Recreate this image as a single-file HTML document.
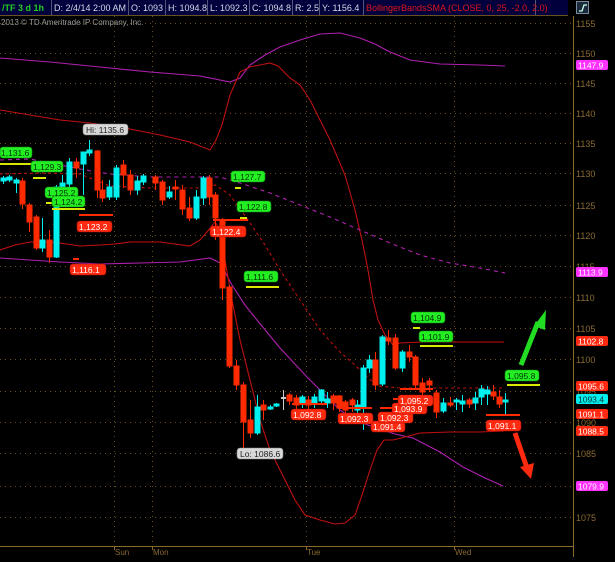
<!DOCTYPE html>
<html><head><meta charset="utf-8"><style>
html,body{margin:0;padding:0;background:#000;}
body{width:615px;height:557px;overflow:hidden;font-family:"Liberation Sans","DejaVu Sans",sans-serif;}
svg text{font-family:"Liberation Sans","DejaVu Sans",sans-serif;}
</style></head><body>
<svg width="615" height="557" viewBox="0 0 615 557" xmlns="http://www.w3.org/2000/svg">
<rect width="615" height="557" fill="#000"/>
<!-- top bar -->
<rect x="0" y="0" width="568" height="15" fill="#00003c"/>
<g stroke="#55557a" stroke-width="1" fill="none">
<line x1="51.5" y1="0" x2="51.5" y2="15"/><line x1="128.5" y1="0" x2="128.5" y2="15"/>
<line x1="165.5" y1="0" x2="165.5" y2="15"/><line x1="207.5" y1="0" x2="207.5" y2="15"/>
<line x1="249.5" y1="0" x2="249.5" y2="15"/><line x1="292.5" y1="0" x2="292.5" y2="15"/>
<line x1="319.5" y1="0" x2="319.5" y2="15"/><line x1="363.5" y1="0" x2="363.5" y2="15"/>
<line x1="535.5" y1="0" x2="535.5" y2="15"/>
</g>
<line x1="0" y1="15.5" x2="568" y2="15.5" stroke="#6a5020"/>
<g font-size="9" fill="#d8d8e8">
<text x="2" y="11" fill="#22cc22" font-weight="bold">/TF 3 d 1h</text>
<text x="54" y="11">D: 2/4/14 2:00 AM</text>
<text x="131" y="11">O: 1093</text>
<text x="168" y="11">H: 1094.8</text>
<text x="210" y="11">L: 1092.3</text>
<text x="252" y="11">C: 1094.8</text>
<text x="295" y="11">R: 2.5</text>
<text x="322" y="11">Y: 1156.4</text>
<text x="366" y="11" fill="#e01818">BollingerBandsSMA (CLOSE, 0, 25, -2.0, 2.0)</text>
</g>
<rect x="576.5" y="1.5" width="12" height="12" fill="#1a2a3a" stroke="#7a8a9a"/>
<path d="M579 11 L582 11 L584 5 L587 5" stroke="#cfe" stroke-width="1.3" fill="none"/>
<!-- grid -->
<g stroke="#6a5018" stroke-width="1" stroke-dasharray="1,4">
<line x1="0" y1="23.5" x2="573" y2="23.5"/><line x1="0" y1="53.5" x2="573" y2="53.5"/>
<line x1="0" y1="83.5" x2="573" y2="83.5"/><line x1="0" y1="113.5" x2="573" y2="113.5"/>
<line x1="0" y1="143.5" x2="573" y2="143.5"/><line x1="0" y1="173.5" x2="573" y2="173.5"/>
<line x1="0" y1="205.5" x2="573" y2="205.5"/><line x1="0" y1="235.5" x2="573" y2="235.5"/>
<line x1="0" y1="266.5" x2="573" y2="266.5"/><line x1="0" y1="297.5" x2="573" y2="297.5"/>
<line x1="0" y1="328.5" x2="573" y2="328.5"/><line x1="0" y1="359.5" x2="573" y2="359.5"/>
<line x1="0" y1="391.5" x2="573" y2="391.5"/><line x1="0" y1="422.5" x2="573" y2="422.5"/>
<line x1="0" y1="453.5" x2="573" y2="453.5"/><line x1="0" y1="486.5" x2="573" y2="486.5"/>
<line x1="0" y1="517.5" x2="573" y2="517.5"/>
<line x1="114.5" y1="16" x2="114.5" y2="546"/><line x1="152.5" y1="16" x2="152.5" y2="546"/>
<line x1="306.5" y1="16" x2="306.5" y2="546"/><line x1="454.5" y1="16" x2="454.5" y2="546"/>
</g>
<line x1="573.5" y1="16" x2="573.5" y2="557" stroke="#8a6a28"/>
<line x1="0" y1="546.5" x2="573" y2="546.5" stroke="#8a6a28"/>
<g stroke="#8a6a28"><line x1="114.5" y1="546" x2="114.5" y2="550"/><line x1="152.5" y1="546" x2="152.5" y2="550"/><line x1="306.5" y1="546" x2="306.5" y2="550"/><line x1="454.5" y1="546" x2="454.5" y2="550"/></g>
<g font-size="8" fill="#8a6a30">
<text x="115" y="555">Sun</text><text x="153" y="555">Mon</text><text x="307" y="555">Tue</text><text x="455" y="555">Wed</text>
</g>
<g font-size="9" fill="#8a6a30">
<text x="576" y="27">1155</text><text x="576" y="57">1150</text><text x="576" y="87">1145</text>
<text x="576" y="117">1140</text><text x="576" y="147">1135</text><text x="576" y="177">1130</text>
<text x="576" y="209">1125</text><text x="576" y="239">1120</text><text x="576" y="270">1115</text>
<text x="576" y="301">1110</text><text x="576" y="332">1105</text><text x="576" y="363">1100</text>
<text x="576" y="395">1095</text><text x="576" y="426">1090</text><text x="576" y="457">1085</text>
<text x="576" y="490">1080</text><text x="576" y="521">1075</text>
</g>
<text x="1" y="25" font-size="8" fill="#9a9a9a">2013 © TD Ameritrade IP Company, Inc.</text>
<!-- bands -->
<g fill="none" stroke-width="1.1">
<polyline stroke="#b020b0" points="0,58 50,62 100,67 150,72 200,76 230,82 240,78 250,65 265,55 280,47 300,40 320,34 340,33 360,38 375,44 390,52 410,60 440,64 480,65 505,66"/>
<polyline stroke="#b020b0" points="0,258 60,262 100,264 140,263 180,262 210,258 220,263 232,285 245,305 257,320 280,348 307,377 325,395 340,410 355,420 373,427 395,434 413,438 440,452 463,467 485,478 503,486"/>
<polyline stroke="#c01010" points="0,110 30,115 60,120 90,123 125,128 160,135 190,142 210,150 216,140 222,125 230,95 240,72 250,67 260,65 270,63 278,66 290,78 300,85 310,100 320,120 330,140 345,175 355,210 362,240 368,270 373,300 378,320 385,335 393,345 400,343 420,342 460,342 504,342"/>
<polyline stroke="#c01010" points="0,250 15,245 30,242 45,242 60,243 80,246 100,245 115,244 130,242 160,242 190,246 200,240 207,232 215,222 219,228 225,260 232,300 240,340 250,380 260,420 270,450 285,480 295,500 305,515 320,520 335,524 345,523 355,515 362,495 370,470 377,450 384,440 393,440 405,437 420,433 450,432 480,432 504,431"/>
<polyline stroke="#b020b0" stroke-dasharray="4,4" points="0,160 30,159 60,165 80,169 110,174 150,177 220,177 240,183 270,193 300,205 330,217 360,230 390,243 420,255 450,263 480,268 505,273"/>
<polyline stroke="#c01010" stroke-dasharray="3,3" points="0,174 40,173 80,174 110,186 150,188 200,188 215,185 230,195 248,220 265,245 280,270 300,300 320,330 340,352 355,365 368,378 378,386 400,388 504,388"/>
</g>
<!-- candles -->
<g stroke-width="1">
<g fill="#00f0f0" stroke="#00f0f0">
<line x1="3.5" y1="176" x2="3.5" y2="184"/><rect x="1" y="178" width="5" height="3"/>
<line x1="9.5" y1="175" x2="9.5" y2="182"/><rect x="7" y="177" width="5" height="3"/>
<line x1="16.5" y1="178" x2="16.5" y2="193"/><rect x="14" y="180" width="5" height="3"/>
<line x1="42.5" y1="218" x2="42.5" y2="252"/><rect x="40" y="240" width="5" height="8"/>
<line x1="56.5" y1="185" x2="56.5" y2="258"/><rect x="54" y="187" width="5" height="70"/>
<line x1="62.5" y1="175" x2="62.5" y2="190"/><rect x="60" y="183" width="5" height="4"/>
<line x1="69.5" y1="158" x2="69.5" y2="188"/><rect x="67" y="162" width="5" height="22"/>
<line x1="83.5" y1="152" x2="83.5" y2="195"/><rect x="81" y="152" width="5" height="12"/>
<line x1="89.5" y1="140" x2="89.5" y2="156"/><rect x="87" y="150" width="5" height="3"/>
<line x1="109.5" y1="180" x2="109.5" y2="200"/><rect x="107" y="187" width="5" height="10"/>
<line x1="116.5" y1="165" x2="116.5" y2="200"/><rect x="114" y="168" width="5" height="29"/>
<line x1="137.5" y1="176" x2="137.5" y2="195"/><rect x="135" y="181" width="5" height="9"/>
<line x1="143.5" y1="174" x2="143.5" y2="185"/><rect x="141" y="176" width="5" height="6"/>
<line x1="169.5" y1="186" x2="169.5" y2="199"/><rect x="167" y="192" width="5" height="5"/>
<line x1="196.5" y1="190" x2="196.5" y2="220"/><rect x="194" y="197" width="5" height="21"/>
<line x1="203.5" y1="176" x2="203.5" y2="205"/><rect x="201" y="178" width="5" height="20"/>
<line x1="257.5" y1="395" x2="257.5" y2="435"/><rect x="255" y="407" width="5" height="26"/>
<line x1="270.5" y1="405" x2="270.5" y2="410"/><rect x="268" y="407" width="5" height="2"/>
<line x1="276.5" y1="403" x2="276.5" y2="407"/><rect x="274" y="404" width="5" height="2"/>
<line x1="302.5" y1="395" x2="302.5" y2="408"/><rect x="300" y="397" width="5" height="6"/>
<line x1="314.5" y1="394" x2="314.5" y2="408"/><rect x="312" y="397" width="5" height="7"/>
<line x1="321.5" y1="389" x2="321.5" y2="404"/><rect x="319" y="390" width="5" height="11"/>
<line x1="327.5" y1="392" x2="327.5" y2="408"/><rect x="325" y="399" width="5" height="4"/>
<line x1="357.5" y1="400" x2="357.5" y2="415"/><rect x="355" y="405" width="5" height="5"/>
<line x1="363.5" y1="365" x2="363.5" y2="430"/><rect x="361" y="368" width="5" height="39"/>
<line x1="369.5" y1="355" x2="369.5" y2="373"/><rect x="367" y="360" width="5" height="8"/>
<line x1="382.5" y1="335" x2="382.5" y2="386"/><rect x="380" y="337" width="5" height="47"/>
<line x1="402.5" y1="350" x2="402.5" y2="372"/><rect x="400" y="352" width="5" height="16"/>
<line x1="443.5" y1="398" x2="443.5" y2="413"/><rect x="441" y="403" width="5" height="8"/>
<line x1="456.5" y1="398" x2="456.5" y2="410"/><rect x="454" y="400" width="5" height="2"/>
<line x1="462.5" y1="395" x2="462.5" y2="412"/><rect x="460" y="401" width="5" height="3"/>
<line x1="475.5" y1="392" x2="475.5" y2="410"/><rect x="473" y="398" width="5" height="5"/>
<line x1="481.5" y1="385" x2="481.5" y2="405"/><rect x="479" y="389" width="5" height="8"/>
<line x1="487.5" y1="386" x2="487.5" y2="405"/><rect x="485" y="390" width="5" height="4"/>
<line x1="505.5" y1="393" x2="505.5" y2="415"/><rect x="503" y="400" width="5" height="2"/>
</g>
<g fill="#ff2a00" stroke="#ff2a00">
<line x1="22.5" y1="178" x2="22.5" y2="209"/><rect x="20" y="181" width="5" height="23"/>
<line x1="29.5" y1="203" x2="29.5" y2="232"/><rect x="27" y="205" width="5" height="17"/>
<line x1="36.5" y1="215" x2="36.5" y2="250"/><rect x="34" y="217" width="5" height="31"/>
<line x1="49.5" y1="230" x2="49.5" y2="263"/><rect x="47" y="240" width="5" height="17"/>
<line x1="76.5" y1="158" x2="76.5" y2="178"/><rect x="74" y="162" width="5" height="6"/>
<line x1="97.5" y1="150" x2="97.5" y2="198"/><rect x="95" y="151" width="5" height="39"/>
<line x1="102.5" y1="180" x2="102.5" y2="202"/><rect x="100" y="190" width="5" height="8"/>
<line x1="123.5" y1="160" x2="123.5" y2="188"/><rect x="121" y="165" width="5" height="10"/>
<line x1="130.5" y1="170" x2="130.5" y2="195"/><rect x="128" y="175" width="5" height="15"/>
<line x1="155.5" y1="175" x2="155.5" y2="190"/><rect x="153" y="177" width="5" height="6"/>
<line x1="162.5" y1="180" x2="162.5" y2="205"/><rect x="160" y="182" width="5" height="18"/>
<line x1="175.5" y1="180" x2="175.5" y2="200"/><rect x="173" y="187" width="5" height="2"/>
<line x1="182.5" y1="185" x2="182.5" y2="215"/><rect x="180" y="190" width="5" height="19"/>
<line x1="189.5" y1="197" x2="189.5" y2="221"/><rect x="187" y="208" width="5" height="10"/>
<line x1="209.5" y1="175" x2="209.5" y2="205"/><rect x="207" y="178" width="5" height="19"/>
<line x1="215.5" y1="192" x2="215.5" y2="240"/><rect x="213" y="195" width="5" height="23"/>
<line x1="222.5" y1="218" x2="222.5" y2="300"/><rect x="220" y="220" width="5" height="68"/>
<line x1="229.5" y1="285" x2="229.5" y2="368"/><rect x="227" y="287" width="5" height="79"/>
<line x1="236.5" y1="360" x2="236.5" y2="390"/><rect x="234" y="366" width="5" height="19"/>
<line x1="243.5" y1="382" x2="243.5" y2="448"/><rect x="241" y="385" width="5" height="37"/>
<line x1="250.5" y1="400" x2="250.5" y2="438"/><rect x="248" y="420" width="5" height="13"/>
<line x1="263.5" y1="400" x2="263.5" y2="420"/><rect x="261" y="405" width="5" height="5"/>
<line x1="289.5" y1="393" x2="289.5" y2="405"/><rect x="287" y="395" width="5" height="6"/>
<line x1="296.5" y1="395" x2="296.5" y2="410"/><rect x="294" y="398" width="5" height="7"/>
<line x1="308.5" y1="396" x2="308.5" y2="410"/><rect x="306" y="400" width="5" height="5"/>
<line x1="333.5" y1="394" x2="333.5" y2="410"/><rect x="331" y="396" width="5" height="7"/>
<line x1="339.5" y1="395" x2="339.5" y2="412"/><rect x="337" y="396" width="5" height="12"/>
<line x1="345.5" y1="400" x2="345.5" y2="415"/><rect x="343" y="402" width="5" height="8"/>
<line x1="352.5" y1="398" x2="352.5" y2="412"/><rect x="350" y="400" width="5" height="5"/>
<line x1="375.5" y1="352" x2="375.5" y2="390"/><rect x="373" y="360" width="5" height="25"/>
<line x1="388.5" y1="330" x2="388.5" y2="345"/><rect x="386" y="338" width="5" height="3"/>
<line x1="395.5" y1="334" x2="395.5" y2="370"/><rect x="393" y="338" width="5" height="30"/>
<line x1="409.5" y1="345" x2="409.5" y2="362"/><rect x="407" y="352" width="5" height="5"/>
<line x1="415.5" y1="355" x2="415.5" y2="388"/><rect x="413" y="357" width="5" height="28"/>
<line x1="422.5" y1="378" x2="422.5" y2="395"/><rect x="420" y="383" width="5" height="9"/>
<line x1="429.5" y1="378" x2="429.5" y2="392"/><rect x="427" y="381" width="5" height="4"/>
<line x1="436.5" y1="390" x2="436.5" y2="418"/><rect x="434" y="393" width="5" height="19"/>
<line x1="450.5" y1="397" x2="450.5" y2="407"/><rect x="448" y="403" width="5" height="2"/>
<line x1="469.5" y1="398" x2="469.5" y2="408"/><rect x="467" y="400" width="5" height="4"/>
<line x1="493.5" y1="385" x2="493.5" y2="400"/><rect x="491" y="392" width="5" height="4"/>
<line x1="499.5" y1="390" x2="499.5" y2="408"/><rect x="497" y="397" width="5" height="7"/>
</g>
<line x1="283.5" y1="390" x2="283.5" y2="410" stroke="#ccc"/><rect x="281" y="397" width="5" height="2" fill="#ccc"/>
</g>
<!-- marker lines -->
<g stroke-width="2">
<g stroke="#d8e800">
<line x1="0" y1="164" x2="33" y2="164"/><line x1="33" y1="178" x2="46" y2="178"/>
<line x1="46" y1="203" x2="53" y2="203"/><line x1="52" y1="209" x2="85" y2="209"/>
<line x1="235" y1="188" x2="241" y2="188"/><line x1="240" y1="218" x2="247" y2="218"/>
<line x1="246" y1="287" x2="279" y2="287"/><line x1="413" y1="328" x2="420" y2="328"/>
<line x1="420" y1="346" x2="453" y2="346"/><line x1="507" y1="385" x2="540" y2="385"/>
</g>
<g stroke="#ff2a00">
<line x1="79" y1="215" x2="113" y2="215"/><line x1="73" y1="259" x2="79" y2="259"/>
<line x1="213" y1="220" x2="248" y2="220"/><line x1="292" y1="404" x2="327" y2="404"/>
<line x1="340" y1="408" x2="372" y2="408"/><line x1="380" y1="408" x2="415" y2="408"/>
<line x1="393" y1="399" x2="426" y2="399"/><line x1="400" y1="389" x2="433" y2="389"/>
<line x1="486" y1="415" x2="520" y2="415"/>
</g>
</g>
<!-- labels -->
<g font-size="8.5">
<g fill="#22ee22" stroke="#118811" stroke-width="0.6">
<rect x="0" y="147" width="32" height="11" rx="3"/><rect x="31" y="161" width="32" height="11" rx="3"/>
<rect x="45" y="187" width="33" height="11" rx="3"/><rect x="52" y="196" width="33" height="11" rx="3"/>
<rect x="231" y="171" width="34" height="11" rx="3"/><rect x="237" y="201" width="34" height="11" rx="3"/>
<rect x="244" y="271" width="34" height="11" rx="3"/><rect x="411" y="312" width="34" height="11" rx="3"/>
<rect x="419" y="331" width="34" height="11" rx="3"/><rect x="505" y="370" width="34" height="11" rx="3"/>
</g>
<g fill="#003300">
<text x="1" y="156">1,131.6</text><text x="33" y="170">1,129.3</text>
<text x="47" y="196">1,125.2</text><text x="54" y="205">1,124.2</text>
<text x="233" y="180">1,127.7</text><text x="239" y="210">1,122.8</text>
<text x="246" y="280">1,111.6</text><text x="413" y="321">1,104.9</text>
<text x="421" y="340">1,101.9</text><text x="507" y="379">1,095.8</text>
</g>
<g fill="#ff2a10" stroke="#aa1100" stroke-width="0.6">
<rect x="77" y="221" width="35" height="11" rx="3"/><rect x="70" y="264" width="36" height="11" rx="3"/>
<rect x="210" y="226" width="36" height="11" rx="3"/><rect x="291" y="409" width="35" height="11" rx="3"/>
<rect x="371" y="421" width="34" height="11" rx="3"/><rect x="338" y="413" width="35" height="11" rx="3"/>
<rect x="378" y="412" width="35" height="11" rx="3"/><rect x="392" y="403" width="35" height="11" rx="3"/>
<rect x="398" y="395" width="35" height="11" rx="3"/><rect x="486" y="420" width="35" height="11" rx="3"/>
</g>
<g fill="#fff">
<text x="79" y="230">1,123.2</text><text x="72" y="273">1,116.1</text>
<text x="212" y="235">1,122.4</text><text x="293" y="418">1,092.8</text>
<text x="373" y="430">1,091.4</text><text x="340" y="422">1,092.3</text>
<text x="380" y="421">1,092.3</text><text x="394" y="412">1,093.9</text>
<text x="400" y="404">1,095.2</text><text x="488" y="429">1,091.1</text>
</g>
<rect x="83" y="124" width="45" height="11" rx="3" fill="#d8d8d8" stroke="#888" stroke-width="0.6"/>
<text x="86" y="133" fill="#222">Hi: 1135.6</text>
<rect x="237" y="448" width="46" height="11" rx="3" fill="#d8d8d8" stroke="#888" stroke-width="0.6"/>
<text x="240" y="457" fill="#222">Lo: 1086.6</text>
</g>
<!-- right tags -->
<g font-size="8.5">
<rect x="576" y="60" width="32" height="10" rx="2" fill="#ff33ff"/><text x="578" y="68.5" fill="#fff">1147.9</text>
<rect x="576" y="267" width="32" height="10" rx="2" fill="#ff33ff"/><text x="578" y="275.5" fill="#fff">1113.9</text>
<rect x="576" y="336" width="32" height="10" rx="2" fill="#ff2a10"/><text x="578" y="344.5" fill="#fff">1102.8</text>
<rect x="576" y="381" width="32" height="10" rx="2" fill="#ff2a10"/><text x="578" y="389.5" fill="#fff">1095.6</text>
<rect x="576" y="394" width="32" height="10" rx="2" fill="#00eeee"/><text x="578" y="402.5" fill="#003333">1093.4</text>
<rect x="576" y="409" width="32" height="10" rx="2" fill="#ff2a10"/><text x="578" y="417.5" fill="#fff">1091.1</text>
<rect x="576" y="426" width="32" height="10" rx="2" fill="#ff2a10"/><text x="578" y="434.5" fill="#fff">1088.5</text>
<rect x="576" y="481" width="32" height="10" rx="2" fill="#ff33ff"/><text x="578" y="489.5" fill="#fff">1079.9</text>
</g>
<!-- arrows -->
<line x1="521" y1="365" x2="538" y2="322" stroke="#22dd22" stroke-width="5"/>
<polygon points="534,326 546,310 545,330" fill="#22dd22"/>
<line x1="515" y1="433" x2="527" y2="468" stroke="#ff2a10" stroke-width="5"/>
<polygon points="520,467 534,463 531,479" fill="#ff2a10"/>
</svg>
</body></html>
